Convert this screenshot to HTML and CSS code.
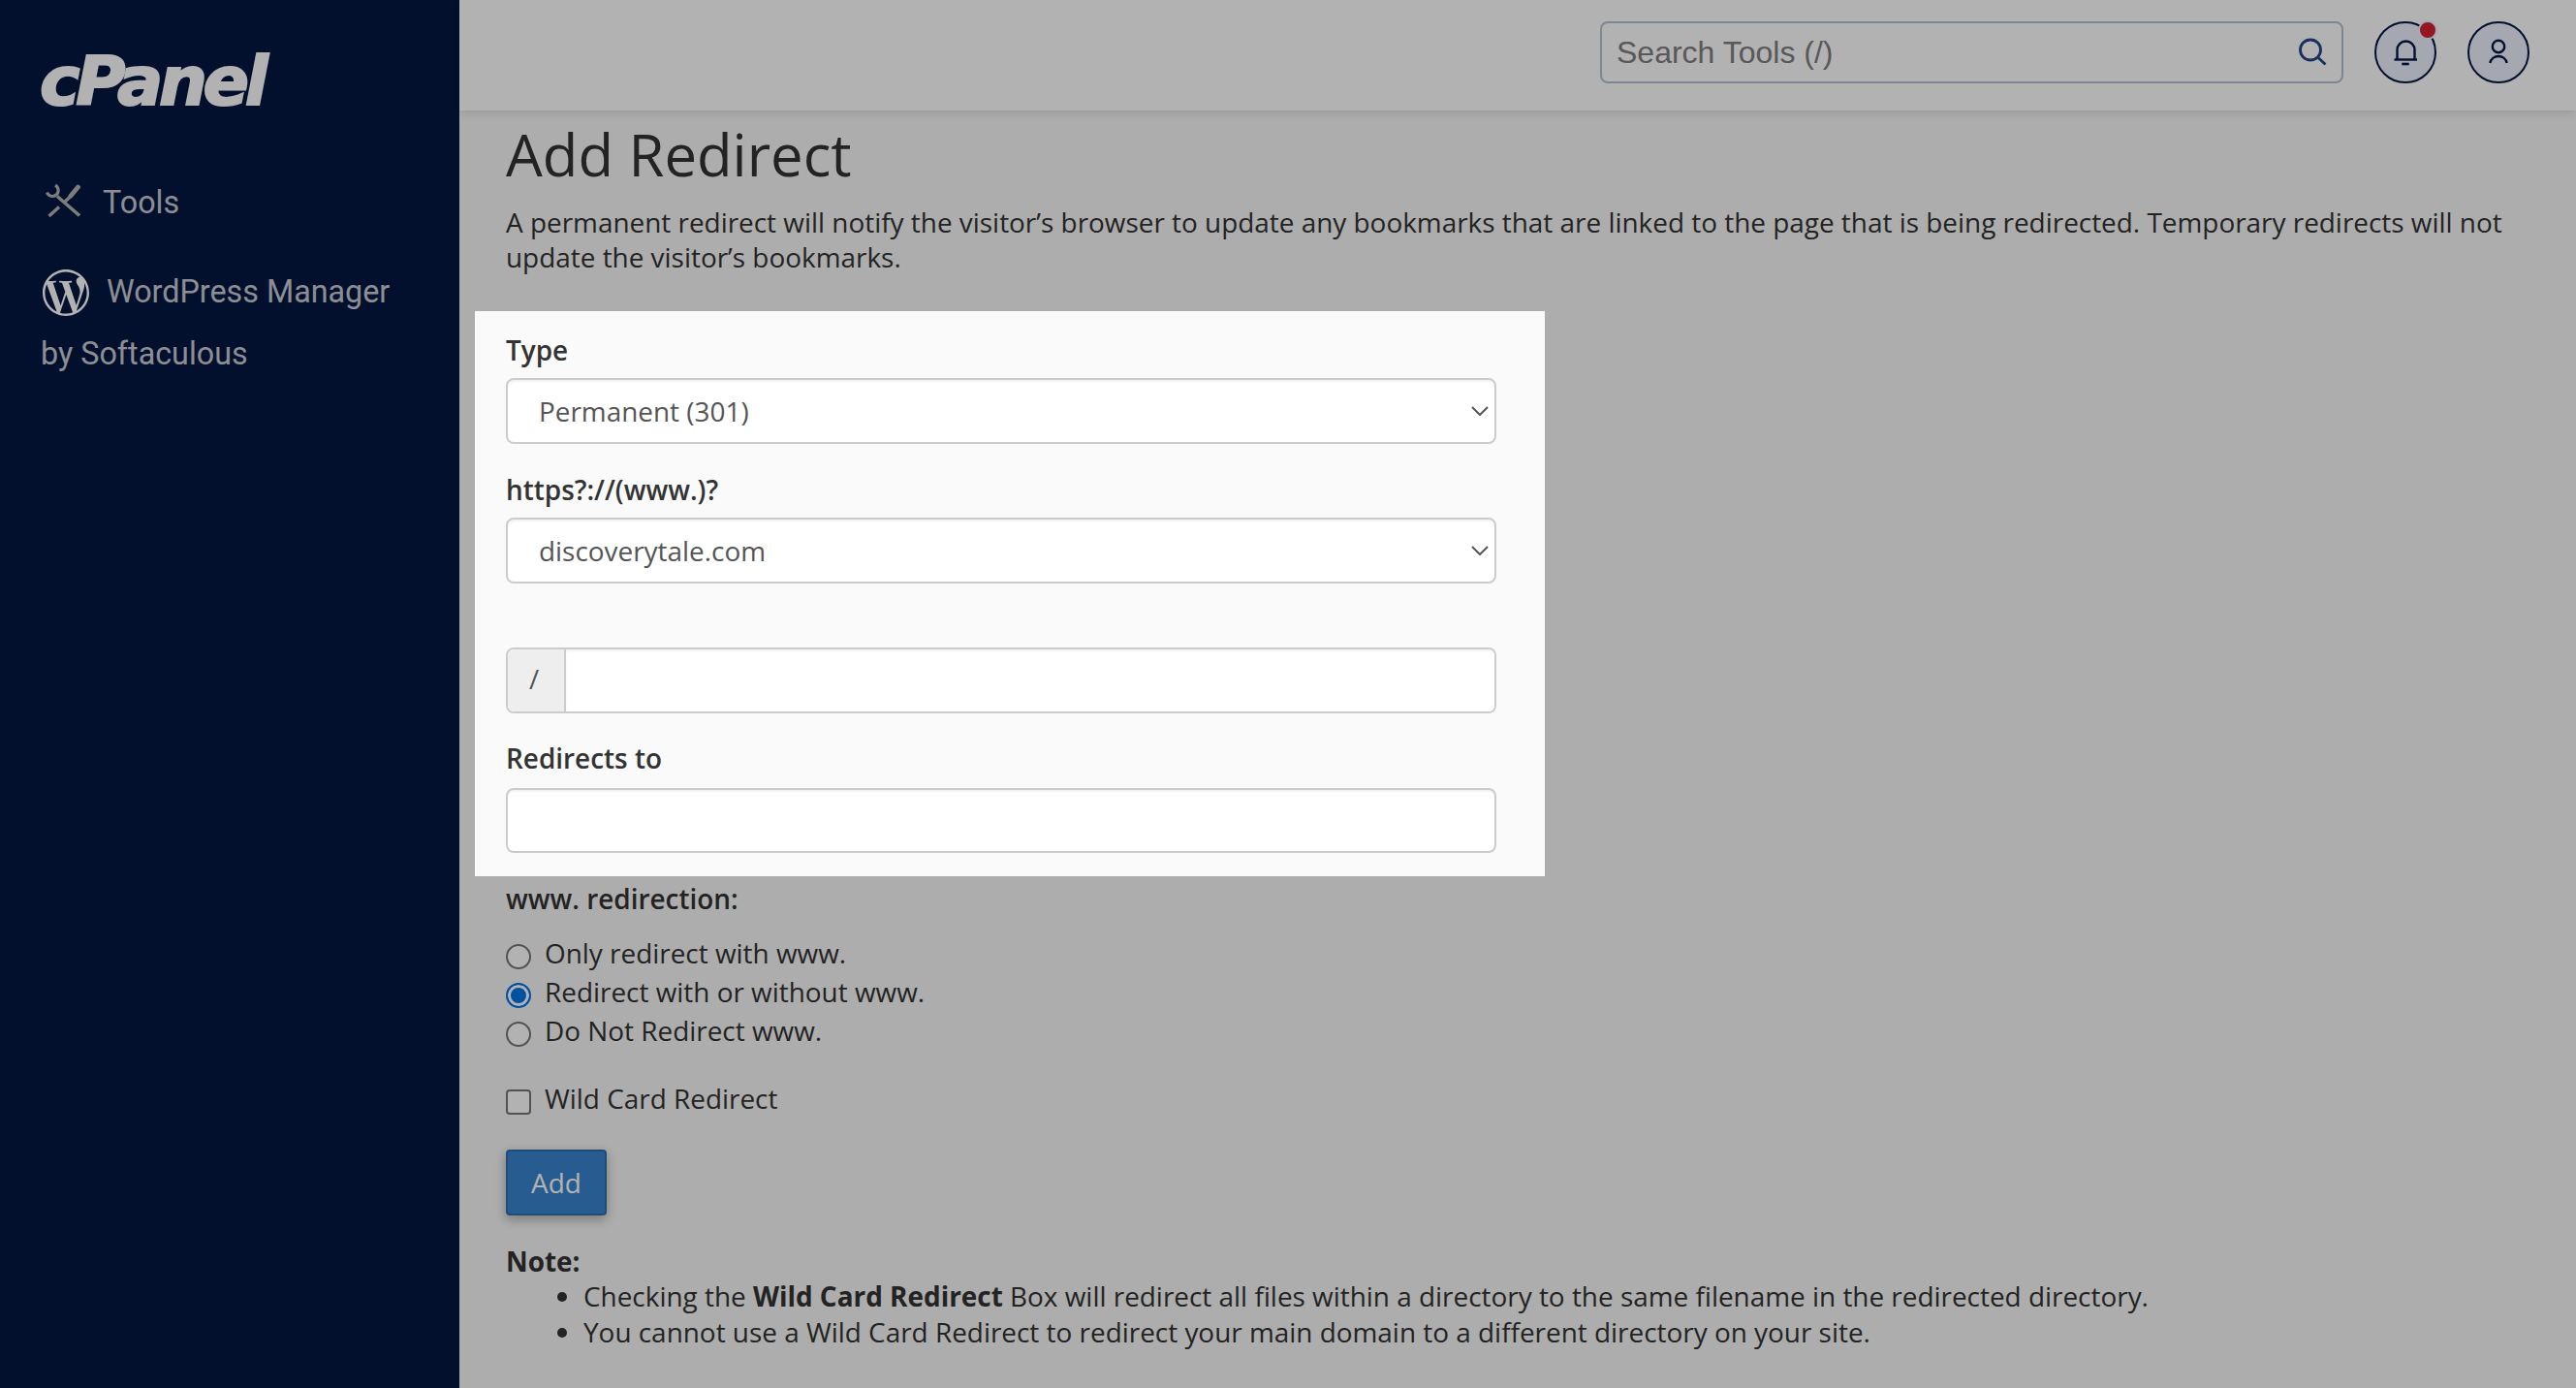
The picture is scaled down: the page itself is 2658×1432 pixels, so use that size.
FILE: index.html
```html
<!DOCTYPE html>
<html lang="en">
<head>
<meta charset="utf-8">
<title>Add Redirect</title>
<link rel="stylesheet" href="styles.css">
</head>
<body>
<div class="app">
  <aside class="sidebar">
    <div class="logo">cPanel</div>
    <nav class="nav">
      <a class="nav-item" href="#"><svg class="icon-tools" viewBox="0 0 36 36" fill="none" stroke="currentColor" stroke-width="3.2"><path d="M10 2.2A6 6 0 1 1 1.5 9.5"/><path d="M12 13.5 35 33.5" stroke-width="3.4"/><path d="M3.5 34 14 24.5" stroke-width="3.4"/><path d="M20 19 26 13.5" stroke-width="3.4"/><path d="M26 13 33.5 4" stroke-width="4.8" stroke-linecap="round"/></svg><span>Tools</span></a>
      <a class="nav-item nav-wp" href="#"><svg class="icon-wp" viewBox="0 0 24 24" fill="currentColor"><path d="M21.469 6.825c.84 1.537 1.318 3.3 1.318 5.175 0 3.979-2.156 7.456-5.363 9.325l3.295-9.527c.615-1.54.82-2.771.82-3.864 0-.405-.026-.78-.07-1.11m-7.981.105c.647-.03 1.232-.105 1.232-.105.582-.075.514-.93-.067-.899 0 0-1.755.135-2.88.135-1.064 0-2.85-.15-2.85-.15-.585-.03-.661.855-.075.885 0 0 .54.061 1.125.09l1.68 4.605-2.37 7.08L5.354 6.9c.649-.03 1.234-.1 1.234-.1.585-.075.516-.93-.065-.896 0 0-1.746.138-2.874.138-.2 0-.438-.008-.69-.015C4.911 3.15 8.235 1.215 12 1.215c2.809 0 5.365 1.072 7.286 2.833-.046-.003-.091-.009-.141-.009-1.06 0-1.812.923-1.812 1.914 0 .89.513 1.643 1.06 2.531.411.72.89 1.643.89 2.977 0 .915-.354 1.994-.821 3.479l-1.075 3.585-3.9-11.61.001.014zM12 22.784c-1.059 0-2.081-.153-3.048-.437l3.237-9.406 3.315 9.087c.024.053.05.101.078.149-1.12.393-2.325.609-3.582.609M1.211 12c0-1.564.336-3.05.935-4.39L7.29 21.709C3.694 19.96 1.212 16.271 1.211 12M12 0C5.385 0 0 5.385 0 12s5.385 12 12 12 12-5.385 12-12S18.615 0 12 0"/></svg>WordPress Manager by Softaculous</a>
    </nav>
  </aside>
  <div class="main">
    <header class="topbar">
      <div class="search">
        <input class="search-input" type="text" placeholder="Search Tools (/)">
        <svg class="search-icon" viewBox="0 0 30 30" fill="none" stroke="currentColor" stroke-width="2.8"><circle cx="13" cy="13.5" r="10.5"/><path d="M21 21.5 28.5 28.5"/></svg>
      </div>
      <div class="circle-btn">
        <svg class="circle-icon" viewBox="0 0 60 60" fill="none" stroke="currentColor" stroke-width="2.4"><path d="M21.5 37.5V27.5a9 9 0 0 1 18 0V37.5"/><path d="M18.5 37.5H42"/><path d="M26.3 42H33.7" stroke-width="2.6"/></svg>
        <span class="dot"></span>
      </div>
      <div class="circle-btn">
        <svg class="circle-icon" viewBox="0 0 60 60" fill="none" stroke="currentColor" stroke-width="2.4"><circle cx="30" cy="24" r="6.2"/><path d="M21.3 41a8.9 8.9 0 0 1 17.4 0"/></svg>
      </div>
    </header>
    <main class="content">
      <h1 class="title">Add Redirect</h1>
      <p class="intro">A permanent redirect will notify the visitor’s browser to update any bookmarks that are linked to the page that is being redirected. Temporary redirects will not update the visitor’s bookmarks.</p>
      <form class="card">
        <label class="field-label">Type</label>
        <div class="select-wrap">
          <select class="control"><option>Permanent (301)</option></select>
          <svg class="chevron" viewBox="0 0 18 10" fill="none" stroke="currentColor" stroke-width="2"><path d="M1 1 9 9 17 1"/></svg>
        </div>
        <label class="field-label field-next">https?://(www.)?</label>
        <div class="select-wrap">
          <select class="control"><option>discoverytale.com</option></select>
          <svg class="chevron" viewBox="0 0 18 10" fill="none" stroke="currentColor" stroke-width="2"><path d="M1 1 9 9 17 1"/></svg>
        </div>
        <div class="input-group">
          <span class="addon">/</span>
          <input class="group-input" type="text">
        </div>
        <label class="field-label field-last">Redirects to</label>
        <input class="control text-control" type="text">
      </form>
      <div class="www-label">www. redirection:</div>
      <div class="radios">
        <label class="option"><input class="radio" type="radio" name="www"><span>Only redirect with www.</span></label>
        <label class="option"><input class="radio" type="radio" name="www" checked><span>Redirect with or without www.</span></label>
        <label class="option"><input class="radio" type="radio" name="www"><span>Do Not Redirect www.</span></label>
      </div>
      <label class="option wild"><input class="check" type="checkbox"><span>Wild Card Redirect</span></label>
      <button class="add-btn" type="button">Add</button>
      <div class="note-title">Note:</div>
      <ul class="notes">
        <li>Checking the <strong>Wild Card Redirect</strong> Box will redirect all files within a directory to the same filename in the redirected directory.</li>
        <li>You cannot use a Wild Card Redirect to redirect your main domain to a different directory on your site.</li>
      </ul>
    </main>
  </div>
</div>
<div class="overlay"></div>
</body>
</html>
```
FILE: styles.css
```css
* { box-sizing: border-box; }
html, body { margin: 0; height: 100%; }
body {
  font-family: "Open Sans", "Liberation Sans", sans-serif;
  font-size: 27.92px;
  line-height: 36px;
  color: #333;
  background: #f8f8f8;
  overflow: hidden;
}
.app { display: flex; height: 100vh; }
.overlay {
  position: fixed;
  inset: 0;
  background: rgba(0, 0, 0, .3);
  z-index: 10;
  pointer-events: none;
}

/* sidebar */
.sidebar {
  flex: 0 0 474px;
  background: #041742;
  padding-top: 44px;
  color: #c9ccd4;
  font-family: Roboto, "Liberation Sans", sans-serif;
}
.logo {
  height: 80px;
  padding-left: 41px;
  font-family: "DejaVu Sans", sans-serif;
  font-size: 70px;
  line-height: 80px;
  font-weight: 700;
  font-style: italic;
  color: #fff;
  -webkit-text-stroke: 2px #fff;
  letter-spacing: -4.2px;
  margin-bottom: 53px;
  white-space: nowrap;
}
.nav { display: flex; flex-direction: column; gap: 28px; }
.nav-item {
  display: block;
  padding: 0 42px;
  font-size: 32.3px;
  line-height: 64px;
  color: inherit;
  text-decoration: none;
}
.icon-tools {
  width: 36px;
  height: 36px;
  vertical-align: -5px;
  margin: 0 23px 0 5px;
  color: #b3b3b3;
}
.icon-wp {
  width: 48px;
  height: 48px;
  vertical-align: -14px;
  margin: 0 18px 0 2px;
  color: #fff;
}

/* header */
.main { flex: 1; min-width: 0; display: flex; flex-direction: column; }
.topbar {
  position: relative;
  flex: 0 0 114px;
  display: flex;
  justify-content: flex-end;
  align-items: flex-start;
  gap: 32px;
  padding: 22px 48px 0 0;
  background: #fff;
  box-shadow: 0 2px 10px rgba(0, 0, 0, .12);
}
.search { position: relative; width: 767px; height: 64px; }
.search-input {
  width: 100%;
  height: 100%;
  border: 2px solid #b5c0d4;
  border-radius: 8px;
  background: #fff;
  padding: 0 60px 0 15px;
  font-family: "Liberation Sans", Arial, sans-serif;
  font-size: 32px;
  color: #333;
  outline: none;
}
.search-input::placeholder { color: #808080; opacity: 1; }
.search-icon {
  position: absolute;
  right: 17px;
  top: 16px;
  width: 30px;
  height: 30px;
  color: #254489;
}
.circle-btn {
  position: relative;
  width: 64px;
  height: 64px;
  border: 2px solid #041742;
  border-radius: 50%;
  background: #ecf1fd;
  color: #041742;
}
.circle-icon { display: block; width: 60px; height: 60px; }
.dot {
  position: absolute;
  left: 43px;
  top: -3px;
  width: 20px;
  height: 20px;
  border-radius: 50%;
  border: 2px solid #ecf1fd;
  background: #d61f30;
}

/* content */
.content { flex: 1; padding: 9px 48px 0; min-height: 0; }
.title {
  margin: 0 0 16px;
  font-size: 59.8px;
  line-height: 72px;
  font-weight: 400;
}
.intro { margin: 0 0 38px; }
.card {
  position: relative;
  z-index: 20;
  width: 1104px;
  margin-left: -32px;
  padding: 22px 50px 24px 32px;
  background: #fafafa;
}
.field-label {
  display: block;
  font-weight: 600;
  margin-bottom: 11px;
}
.field-next { margin-top: 29px; }
.field-last { margin-top: 28px; }
.select-wrap { position: relative; }
.control {
  display: block;
  width: 100%;
  height: 68px;
  border: 2px solid #ccc;
  border-radius: 8px;
  background: #fff;
  padding: 0 32px;
  font-family: inherit;
  font-size: 27.92px;
  color: #555;
  appearance: none;
  outline: none;
  box-shadow: inset 0 2px 2px rgba(0, 0, 0, .05);
}
.text-control { margin-top: 13px; height: 67px; }
.chevron {
  position: absolute;
  right: 8px;
  top: 29px;
  width: 18px;
  height: 10px;
  color: #555;
  pointer-events: none;
}
.input-group {
  display: flex;
  height: 68px;
  margin-top: 66px;
  border: 2px solid #ccc;
  border-radius: 8px;
  overflow: hidden;
  background: #fff;
}
.addon {
  flex: 0 0 60px;
  background: #eee;
  border-right: 2px solid #ccc;
  color: #555;
  text-align: center;
  line-height: 60px;
  padding-right: 4px;
}
.group-input {
  flex: 1;
  min-width: 0;
  border: 0;
  outline: none;
  background: #fff;
  box-shadow: inset 0 2px 2px rgba(0, 0, 0, .05);
}
.www-label { margin: 5px 0 18px; font-weight: 600; }
.radios { display: flex; flex-direction: column; }
.option {
  display: flex;
  align-items: flex-start;
  gap: 14px;
  line-height: 40px;
}
.radio, .check {
  appearance: none;
  flex: 0 0 26px;
  width: 26px;
  height: 26px;
  margin: 11px 0 0;
  border: 2px solid #767676;
  background: #fff;
}
.radio { border-radius: 50%; }
.radio:checked {
  border-color: #0075e8;
  background: #0075e8;
  box-shadow: inset 0 0 0 3px #fff;
}
.check { border-radius: 4px; }
.wild { margin-top: 30px; }
.add-btn {
  display: block;
  width: 104px;
  height: 68px;
  margin-top: 33px;
  padding: 0;
  border: 2px solid #2f6fad;
  border-radius: 4px;
  background: #3985cf;
  color: #fff;
  font-family: inherit;
  font-size: 27.92px;
  box-shadow: 0 4px 12px rgba(0, 0, 0, .3);
}
.note-title { margin-top: 29px; font-weight: 700; }
.notes { margin: 0; padding-left: 80px; line-height: 37px; }
```
